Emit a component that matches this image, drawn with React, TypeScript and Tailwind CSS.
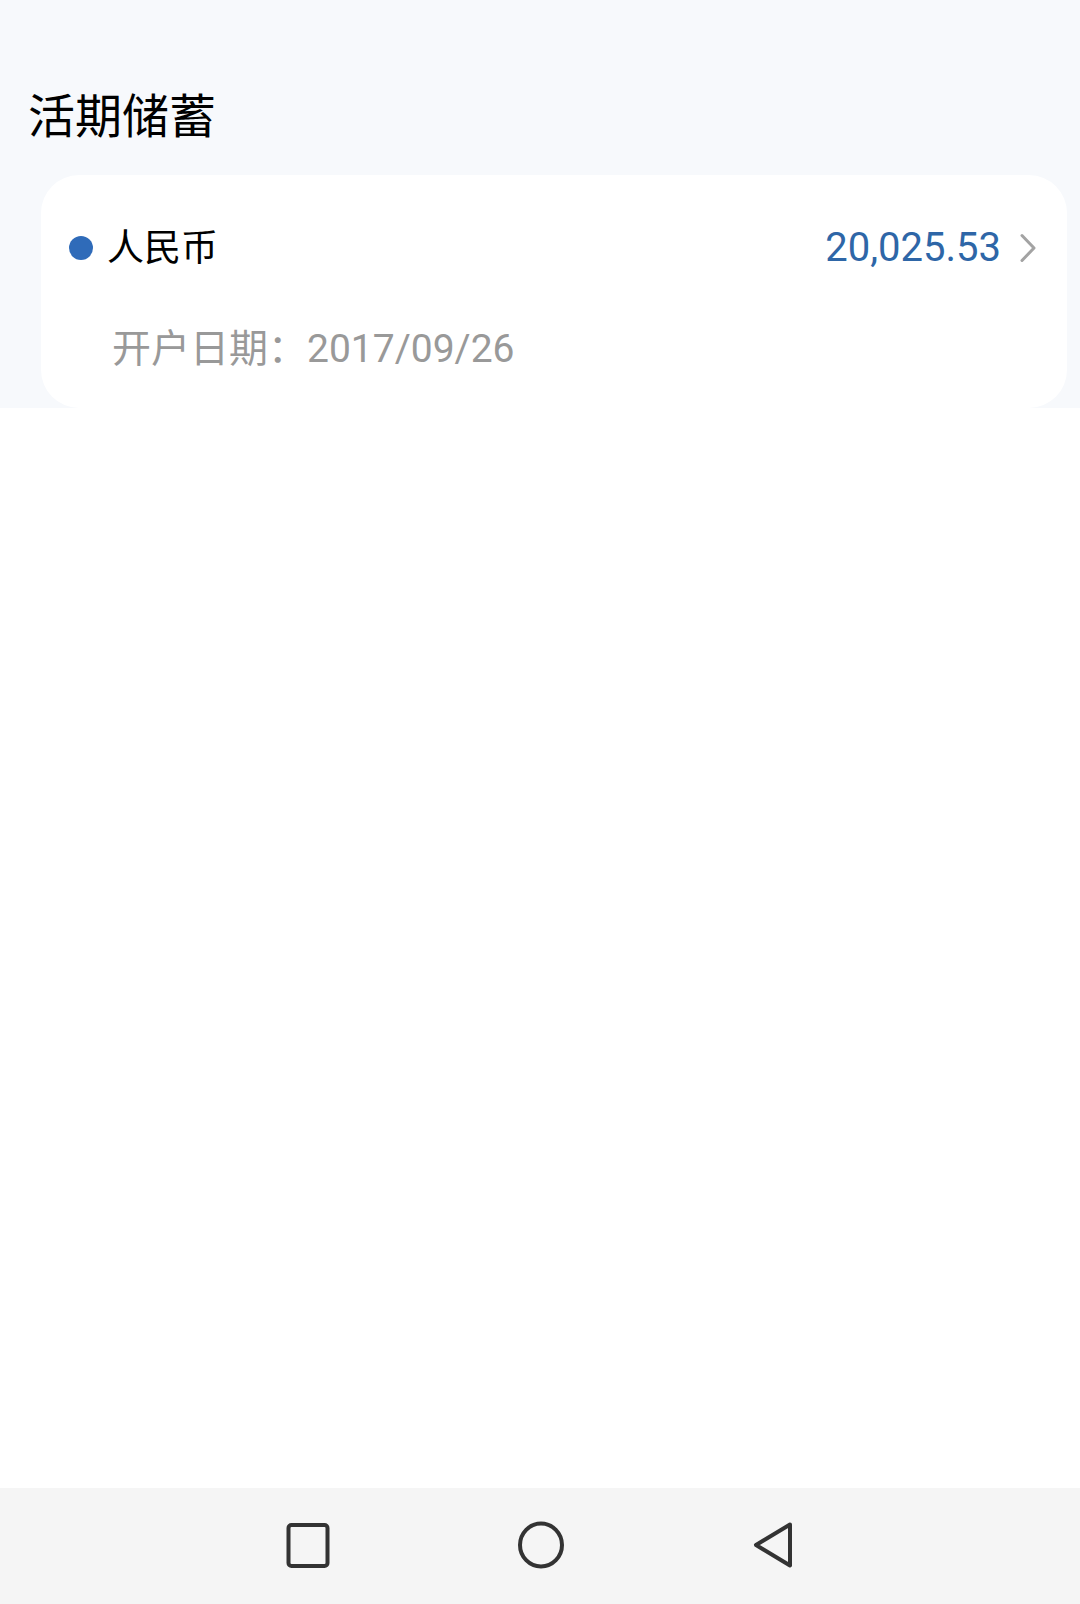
const CJK = "font-['Roboto','Noto_Sans_CJK_SC',sans-serif]";

export default function App() {
  return (
    <div className={`w-[1080px] h-[1604px] flex flex-col bg-white ${CJK}`}>
      <section className="bg-[#f7f9fc]">
        <h1 className="pt-[89px] pl-[28px] text-[47px] leading-[56px] font-normal text-black">活期储蓄</h1>
        <div className="mt-[30px] ml-[41px] w-[1026px] h-[233px] bg-white rounded-[38px] pt-[43px] pl-[28px] pr-[30px]">
          <div className="flex items-center h-[60px]">
            <span className="w-[24px] h-[24px] rounded-full bg-[#2f6bb9]" />
            <span className="ml-[14px] text-[37px] leading-none text-black">人民币</span>
            <span className="ml-auto text-[40px] leading-none text-[#2e66a7]">20,025.53</span>
            <svg className="ml-[18px]" width="18" height="30" viewBox="0 0 18 30" fill="none">
              <path d="M3 2.5 L15 15 L3 27.5" stroke="#a3a3a3" strokeWidth="3" strokeLinecap="round" strokeLinejoin="round" />
            </svg>
          </div>
          <div className="mt-[46px] h-[50px] flex items-center pl-[43px] text-[39px] leading-none text-[#999999]">
            开户日期：2017/09/26
          </div>
        </div>
      </section>
      <div className="flex-1" />
      <nav className="h-[116px] bg-[#f5f5f5] flex items-center justify-center gap-[186px] pb-[2px]">
        <svg width="46" height="46" viewBox="0 0 46 46" fill="none">
          <rect x="3.5" y="3" width="39" height="41" rx="3" stroke="#333" strokeWidth="4" />
        </svg>
        <svg width="48" height="48" viewBox="0 0 48 48" fill="none">
          <ellipse cx="24" cy="24" rx="21" ry="21.5" stroke="#333" strokeWidth="4" />
        </svg>
        <svg width="44" height="48" viewBox="0 0 44 48" fill="none">
          <path d="M39 3.5 L5 24 L39 44.5 Z" stroke="#333" strokeWidth="4" strokeLinejoin="round" />
        </svg>
      </nav>
    </div>
  );
}
